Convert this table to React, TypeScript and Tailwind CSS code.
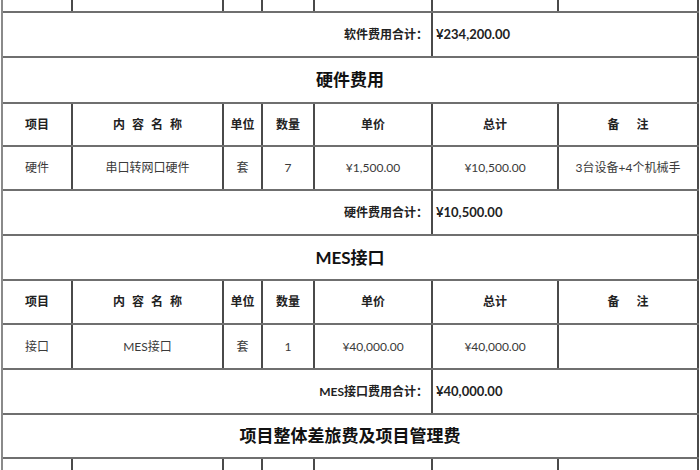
import * as React from "react";

const font = "font-['Lato','Noto_Sans_CJK_SC',sans-serif]";
const widths = ["w-[70px]", "w-[151px]", "w-[39px]", "w-[52px]", "w-[118px]", "w-[126px]", "w-[140px]"];
const vline = "border-r-2 border-[#4a4a4a]";
const hline = "border-b-2 border-[#6f6f6f]";

function Cells({ values, bold }: { values: React.ReactNode[]; bold?: boolean }) {
  return (
    <>
      {values.map((v, i) => (
        <div
          key={i}
          className={`${widths[i]} shrink-0 flex items-center justify-center ${vline} text-[12px] ${
            bold ? "font-bold text-[#222]" : "text-[#3a3a3a]"
          }`}
        >
          {v}
        </div>
      ))}
    </>
  );
}

function Row({ h, children }: { h: string; children: React.ReactNode }) {
  return <div className={`flex ${h} ${hline}`}>{children}</div>;
}

function HeaderRow({ h }: { h: string }) {
  return (
    <Row h={h}>
      <Cells
        bold
        values={[
          "项目",
          <span className="tracking-[7px] pl-[7px]">内容名称</span>,
          "单位",
          "数量",
          "单价",
          "总计",
          <span className="tracking-[17px] pl-[17px]">备注</span>,
        ]}
      />
    </Row>
  );
}

function SumRow({ h, label, value }: { h: string; label: string; value: string }) {
  return (
    <Row h={h}>
      <div className={`w-[430px] shrink-0 flex items-center justify-end pr-[3px] ${vline} text-[12px] font-bold text-[#222]`}>
        {label}
      </div>
      <div className={`w-[266px] shrink-0 flex items-center pl-[3px] ${vline} text-[13px] font-bold text-[#222]`}>
        {value}
      </div>
    </Row>
  );
}

function TitleRow({ h, title }: { h: string; title: string }) {
  return (
    <Row h={h}>
      <div className={`w-[696px] shrink-0 flex items-center justify-center ${vline} text-[17px] font-bold text-[#111]`}>
        {title}
      </div>
    </Row>
  );
}

export default function App() {
  return (
    <div className={`w-[700px] h-[470px] overflow-hidden bg-white ${font}`}>
      <div className="ml-px w-[698px] border-l-2 border-[#8a8a8a]">
        <Row h="h-[13px]">
          <Cells values={["", "", "", "", "", "", ""]} />
        </Row>
        <SumRow h="h-[45px]" label="软件费用合计：" value="¥234,200.00" />
        <TitleRow h="h-[46px]" title="硬件费用" />
        <HeaderRow h="h-[43px]" />
        <Row h="h-[44px]">
          <Cells values={["硬件", "串口转网口硬件", "套", "7", "¥1,500.00", "¥10,500.00", "3台设备+4个机械手"]} />
        </Row>
        <SumRow h="h-[45px]" label="硬件费用合计：" value="¥10,500.00" />
        <TitleRow h="h-[45px]" title="MES接口" />
        <HeaderRow h="h-[44px]" />
        <Row h="h-[45px]">
          <Cells values={["接口", "MES接口", "套", "1", "¥40,000.00", "¥40,000.00", ""]} />
        </Row>
        <SumRow h="h-[45px]" label="MES接口费用合计：" value="¥40,000.00" />
        <TitleRow h="h-[44px]" title="项目整体差旅费及项目管理费" />
        <HeaderRow h="h-[44px]" />
      </div>
    </div>
  );
}
